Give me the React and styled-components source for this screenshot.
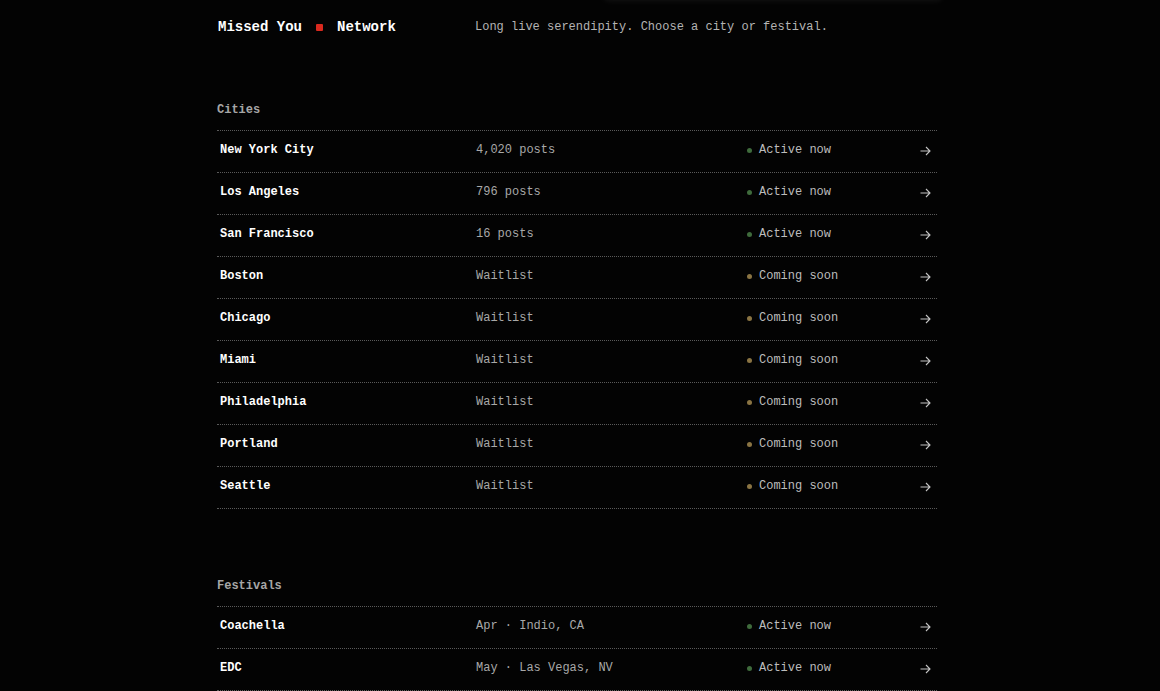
import styled, { createGlobalStyle } from "styled-components";

const GlobalStyle = createGlobalStyle`
  html, body {
    margin: 0;
    background: #030303;
  }
  body {
    font-family: "Courier New", "Liberation Mono", monospace;
    color: #fff;
  }
`;

const Page = styled.div`
  min-height: 100vh;
  padding-right: 6px;
  background: #030303;
  overflow: hidden;
`;

const Container = styled.div`
  position: relative;
  width: 720px;
  margin: 0 auto;
  padding-bottom: 40px;
`;

const TopShade = styled.div`
  position: absolute;
  top: -30px;
  right: -6px;
  width: 340px;
  height: 30px;
  border-radius: 6px;
  box-shadow: 0 1px 6px rgba(255, 255, 255, 0.07);
`;

const Header = styled.header`
  display: grid;
  grid-template-columns: 257px 1fr;
  align-items: center;
  padding: 19px 0 0 1px;
  margin-bottom: 68px;
`;

const Brand = styled.div`
  display: flex;
  align-items: center;
  gap: 14px;
  font-size: 14px;
  font-weight: 700;
  line-height: 16px;
  color: #fff;
`;

const Mark = styled.span`
  width: 7px;
  height: 7px;
  border-radius: 1px;
  background: #d9291e;
`;

const Tagline = styled.p`
  margin: 0;
  font-size: 12px;
  line-height: 16px;
  color: #b4b4b4;
`;

const Section = styled.section`
  & + & {
    margin-top: 70px;
  }
`;

const Label = styled.h2`
  margin: 0 0 13px;
  font-size: 12px;
  line-height: 14px;
  font-weight: 700;
  color: #a6a6a6;
`;

const List = styled.ul`
  list-style: none;
  margin: 0;
  padding: 0;
  border-bottom: 1px dotted #5a5a5a;
`;

const Row = styled.li`
  box-sizing: border-box;
  display: grid;
  grid-template-columns: 256px 270px 1fr auto;
  align-items: center;
  height: 42px;
  padding: 0 6px 3px 3px;
  border-top: 1px dotted #5a5a5a;
  font-size: 12px;
  line-height: 14px;
`;

const Name = styled.span`
  font-weight: 700;
  color: #fff;
`;

const Meta = styled.span`
  color: #a8a8a8;
`;

const Status = styled.span`
  display: flex;
  align-items: center;
  gap: 7px;
  margin-left: 1px;
  color: #bcbcbc;
`;

const Dot = styled.span`
  width: 5px;
  height: 5px;
  border-radius: 50%;
  background: ${(p) => (p.$soon ? "#8a7443" : "#3f6b3c")};
`;

const Arrow = styled.svg`
  display: block;
  margin-top: 2px;
  color: #c4c4c4;
`;

const cities = [
  ["New York City", "4,020 posts", false],
  ["Los Angeles", "796 posts", false],
  ["San Francisco", "16 posts", false],
  ["Boston", "Waitlist", true],
  ["Chicago", "Waitlist", true],
  ["Miami", "Waitlist", true],
  ["Philadelphia", "Waitlist", true],
  ["Portland", "Waitlist", true],
  ["Seattle", "Waitlist", true],
];

const festivals = [
  ["Coachella", "Apr · Indio, CA", false],
  ["EDC", "May · Las Vegas, NV", false],
];

function ArrowIcon() {
  return (
    <Arrow width="11" height="10" viewBox="0 0 11 10" fill="none">
      <path
        d="M0.5 5H10M6 1L10 5L6 9"
        stroke="currentColor"
        strokeWidth="1.1"
      />
    </Arrow>
  );
}

function Entry({ name, meta, soon }) {
  return (
    <Row>
      <Name>{name}</Name>
      <Meta>{meta}</Meta>
      <Status>
        <Dot $soon={soon} />
        {soon ? "Coming soon" : "Active now"}
      </Status>
      <ArrowIcon />
    </Row>
  );
}

function Group({ title, items }) {
  return (
    <Section>
      <Label>{title}</Label>
      <List>
        {items.map(([name, meta, soon]) => (
          <Entry key={name} name={name} meta={meta} soon={soon} />
        ))}
      </List>
    </Section>
  );
}

export default function App() {
  return (
    <Page>
      <GlobalStyle />
      <Container>
        <TopShade />
        <Header>
          <Brand>
            Missed You
            <Mark />
            Network
          </Brand>
          <Tagline>Long live serendipity. Choose a city or festival.</Tagline>
        </Header>
        <Group title="Cities" items={cities} />
        <Group title="Festivals" items={festivals} />
      </Container>
    </Page>
  );
}
